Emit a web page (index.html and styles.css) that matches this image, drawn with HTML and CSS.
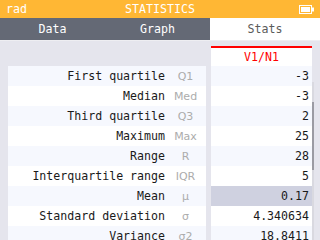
FILE: index.html
```html
<!DOCTYPE html>
<html>
<head>
    <title>Statistics</title>
    <meta charset="UTF-8">
    <link rel="stylesheet" href="styles.css">
</head>
<body>

<header class="title-bar">
    <span class="angle">rad</span>
    <span class="app-name">STATISTICS</span>
    <svg class="battery" width="15" height="9" viewBox="0 0 15 9">
        <rect x="0.5" y="0.5" width="12" height="8" fill="none" stroke="white"/>
        <rect x="2" y="2" width="9" height="5" fill="white"/>
        <rect x="13" y="2.5" width="2" height="4" fill="white"/>
    </svg>
</header>

<nav class="tabs">
    <div class="tab">Data</div>
    <div class="tab">Graph</div>
    <div class="tab active">Stats</div>
</nav>

<main class="stats">
    <div class="labels">
        <div class="corner"></div>
        <div class="row odd"><span class="name">First quartile</span><span class="sym">Q1</span></div>
        <div class="row"><span class="name">Median</span><span class="sym">Med</span></div>
        <div class="row odd"><span class="name">Third quartile</span><span class="sym">Q3</span></div>
        <div class="row"><span class="name">Maximum</span><span class="sym">Max</span></div>
        <div class="row odd"><span class="name">Range</span><span class="sym">R</span></div>
        <div class="row"><span class="name">Interquartile range</span><span class="sym">IQR</span></div>
        <div class="row odd"><span class="name">Mean</span><span class="sym">μ</span></div>
        <div class="row"><span class="name">Standard deviation</span><span class="sym">σ</span></div>
        <div class="row odd"><span class="name">Variance</span><span class="sym">σ2</span></div>
    </div>

    <div class="values">
        <div class="series">V1/N1</div>
        <div class="cell odd">-3</div>
        <div class="cell">-3</div>
        <div class="cell odd">2</div>
        <div class="cell">25</div>
        <div class="cell odd">28</div>
        <div class="cell">5</div>
        <div class="cell selected">0.17</div>
        <div class="cell">4.340634</div>
        <div class="cell odd">18.8411</div>
    </div>

    <div class="scrollbar">
        <div class="thumb"></div>
    </div>
</main>

</body>
</html>
```

FILE: styles.css
```css
body {
    margin: 0;
    width: 320px;
    height: 240px;
    overflow: hidden;
    font-family: "DejaVu Sans Mono", "Liberation Mono", monospace;
    font-size: 11.6px;
    background: #e5e5ed;
}

.title-bar {
    height: 18px;
    background: #ffb734;
    color: white;
    display: flex;
    align-items: center;
    justify-content: space-between;
    padding: 0 6px;
}

.angle {
    width: 40px;
}

.battery {
    width: 15px;
    margin-left: 25px;
}

.tabs {
    display: flex;
    height: 22px;
    background: #646975;
    border-bottom: 1px solid #eeeef2;
}

.tab {
    flex: 0 0 105px;
    display: flex;
    align-items: center;
    justify-content: center;
    color: white;
}

.tab.active {
    flex: 1;
    background: white;
    color: #5b5b5b;
}

.stats {
    display: flex;
    padding: 5px 0 0 8px;
}

.labels {
    width: 198px;
}

.corner {
    height: 20px;
}

.row {
    display: flex;
    height: 20px;
    align-items: center;
    background: white;
    color: #1a1a1a;
}

.row.odd, .cell.odd {
    background: #f6f8fe;
}

.name {
    width: 157px;
    text-align: right;
}

.sym {
    flex: 1;
    text-align: center;
    color: #acacac;
    font-family: "DejaVu Sans", sans-serif;
    font-size: 11px;
}

.values {
    width: 101px;
    margin-left: 5px;
}

.series {
    height: 18px;
    border-top: 2px solid #ff0000;
    background: white;
    color: #ff0000;
    text-align: center;
    line-height: 18px;
}

.cell {
    height: 20px;
    line-height: 20px;
    text-align: right;
    padding-right: 3px;
    background: white;
    color: #1a1a1a;
}

.cell.selected {
    background: #cfd1e0;
}

.scrollbar {
    width: 2px;
    margin-top: 36px;
    height: 200px;
    background: #d9d9e0;
}

.thumb {
    margin-top: 20px;
    height: 68px;
    background: #9b9ba3;
}
```
